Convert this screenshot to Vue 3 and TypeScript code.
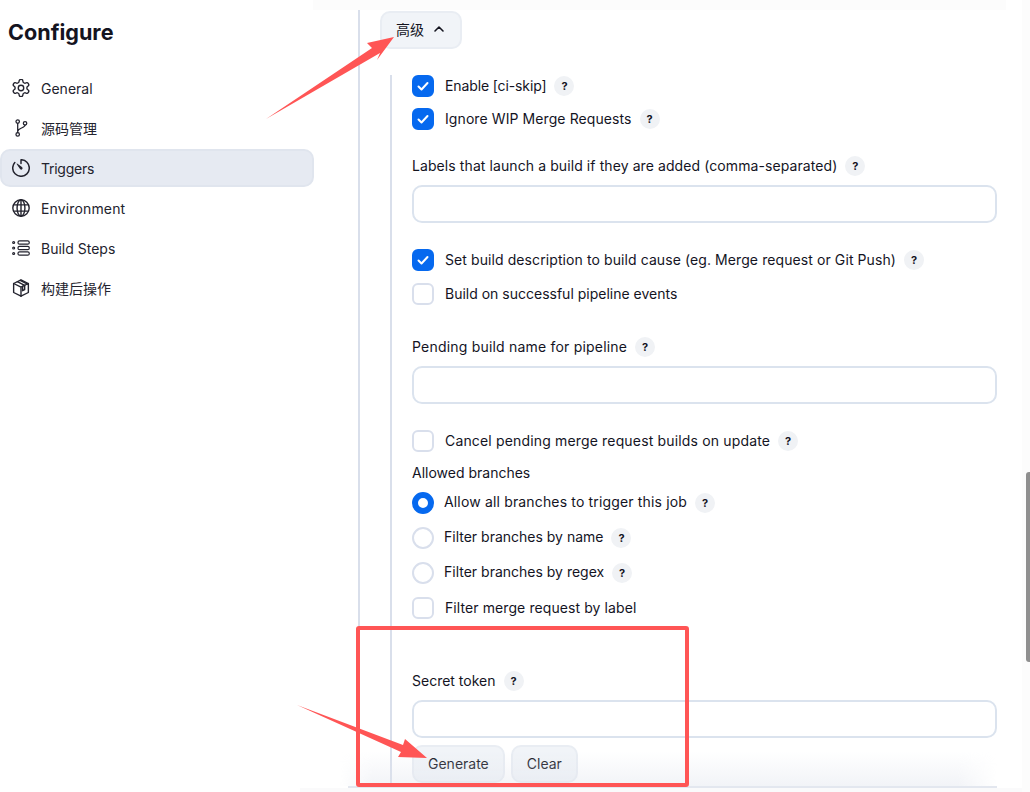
<script setup lang="ts">
const navItems = ['General', '源码管理', 'Triggers', 'Environment', 'Build Steps', '构建后操作']
</script>

<template>
  <div class="page">
    <aside class="sidebar">
      <h1 class="title">Configure</h1>
      <nav class="nav">
        <a v-for="(item, i) in navItems" :key="item" class="nav-item" :class="{ active: i === 2 }">
          <svg v-if="i === 0" class="ico" viewBox="1.500 1.500 21 21" fill="none" stroke="currentColor" stroke-width="1.6" stroke-linecap="round" stroke-linejoin="round"><path d="M12.22 2h-.44a2 2 0 0 0-2 2v.18a2 2 0 0 1-1 1.73l-.43.25a2 2 0 0 1-2 0l-.15-.08a2 2 0 0 0-2.73.73l-.22.38a2 2 0 0 0 .73 2.73l.15.1a2 2 0 0 1 1 1.72v.51a2 2 0 0 1-1 1.74l-.15.09a2 2 0 0 0-.73 2.73l.22.38a2 2 0 0 0 2.73.73l.15-.08a2 2 0 0 1 2 0l.43.25a2 2 0 0 1 1 1.73V20a2 2 0 0 0 2 2h.44a2 2 0 0 0 2-2v-.18a2 2 0 0 1 1-1.73l.43-.25a2 2 0 0 1 2 0l.15.08a2 2 0 0 0 2.73-.73l.22-.39a2 2 0 0 0-.73-2.73l-.15-.08a2 2 0 0 1-1-1.74v-.5a2 2 0 0 1 1-1.74l.15-.09a2 2 0 0 0 .73-2.73l-.22-.38a2 2 0 0 0-2.73-.73l-.15.08a2 2 0 0 1-2 0l-.43-.25a2 2 0 0 1-1-1.73V4a2 2 0 0 0-2-2z"/><circle cx="12" cy="12" r="3.2"/></svg>
          <svg v-else-if="i === 1" class="ico" viewBox="0 0 24 24" fill="none" stroke="currentColor" stroke-width="1.7" stroke-linecap="round" stroke-linejoin="round"><circle cx="7.600" cy="3.400" r="2.300"/><circle cx="7.600" cy="20.600" r="2.300"/><circle cx="17.400" cy="5.800" r="2.300"/><path d="M7.600 5.700v12.600M17.400 8.100c0 4.200-9.800 3.700-9.800 8.400"/></svg>
          <svg v-else-if="i === 2" class="ico" viewBox="48 48 416 416" fill="none" stroke="currentColor" stroke-width="34" stroke-linecap="round" stroke-linejoin="round"><path d="M112.91 128A191.85 191.85 0 0064 254c-1.18 106.35 85.65 193.8 192 194 106.2.2 192-85.83 192-192 0-104.54-83.55-189.61-187.5-192a4.36 4.36 0 00-4.5 4.37V152"/><path d="M233.38 278.63l-79-113a8.13 8.13 0 0111.32-11.32l113 79a32.5 32.5 0 01-37.25 53.26 33.21 33.21 0 01-8.07-7.94z" fill="currentColor" stroke="none"/></svg>
          <svg v-else-if="i === 3" class="ico" viewBox="1 1 22 22" fill="none" stroke="currentColor" stroke-width="1.700"><circle cx="12" cy="12" r="10"/><ellipse cx="12" cy="12" rx="4.800" ry="10"/><path d="M12 2v20M3 8.200h18M3 15.800h18"/></svg>
          <svg v-else-if="i === 4" class="ico" viewBox="0 0 24 24" fill="none" stroke="currentColor" stroke-width="1.600"><rect x="8" y="2.500" width="15" height="4.400" rx="2"/><rect x="8" y="9.800" width="15" height="4.400" rx="2"/><rect x="8" y="17.100" width="15" height="4.400" rx="2"/><circle cx="2.200" cy="4.700" r="1.300"/><circle cx="2.200" cy="12" r="1.300"/><circle cx="2.200" cy="19.300" r="1.300"/></svg>
          <svg v-else class="ico" viewBox="1 1 22 22" fill="none" stroke="currentColor" stroke-width="1.700" stroke-linejoin="round" stroke-linecap="round"><path d="M12 2 21 6.500v11L12 22 3 17.500v-11z"/><path d="M3 6.500 12 11l9-4.500M12 11v11"/><path d="M7.500 4.300 16.500 8.800v5.200M11 2.800l9 4.500M14 9.800v5.500l2.500-1.300"/></svg>
          <span :class="{ 'ls-env': i === 3, 'ls-trig': i === 2 }">{{ item }}</span>
        </a>
      </nav>
    </aside>

    <main class="main">
      <div class="rail">
        <div class="panel">
          <button class="adv" type="button">
            <span class="adv-text">高级</span>
            <svg class="chev" viewBox="0 0 12 12" fill="none" stroke="currentColor" stroke-width="1.600" stroke-linecap="round" stroke-linejoin="round"><path d="M2 8l4-4 4 4"/></svg>
          </button>

          <section class="fields">
            <label class="row ls-n"><span class="box on"><svg viewBox="0 0 22 22" fill="none" stroke="#fff" stroke-width="2" stroke-linecap="round" stroke-linejoin="round"><path d="M6.500 11.500l3 3 6-6.500"/></svg></span>Enable [ci-skip]<i class="help">?</i></label>
            <label class="row g11 ls-1"><span class="box on"><svg viewBox="0 0 22 22" fill="none" stroke="#fff" stroke-width="2" stroke-linecap="round" stroke-linejoin="round"><path d="M6.500 11.500l3 3 6-6.500"/></svg></span>Ignore WIP Merge Requests<i class="help">?</i></label>

            <div class="lbl g25 ls-1">Labels that launch a build if they are added (comma-separated)<i class="help">?</i></div>
            <div class="input g8"></div>

            <label class="row g26 ls-1"><span class="box on"><svg viewBox="0 0 22 22" fill="none" stroke="#fff" stroke-width="2" stroke-linecap="round" stroke-linejoin="round"><path d="M6.500 11.500l3 3 6-6.500"/></svg></span>Set build description to build cause (eg. Merge request or Git Push)<i class="help">?</i></label>
            <label class="row g12"><span class="box"></span>Build on successful pipeline events</label>

            <div class="lbl g31 ls-3">Pending build name for pipeline<i class="help">?</i></div>
            <div class="input g8"></div>

            <label class="row g26 ls-2"><span class="box"></span>Cancel pending merge request builds on update<i class="help">?</i></label>
            <div class="lbl g10">Allowed branches</div>
            <label class="row g8 ls-2"><span class="radio on"></span><span class="radio-text">Allow all branches to trigger this job</span><i class="help">?</i></label>
            <label class="row g13"><span class="radio"></span><span class="radio-text">Filter branches by name</span><i class="help">?</i></label>
            <label class="row g13"><span class="radio"></span><span class="radio-text">Filter branches by regex</span><i class="help">?</i></label>
            <label class="row g13 ls-1"><span class="box"></span>Filter merge request by label</label>

            <div class="lbl g51">Secret token<i class="help">?</i></div>
            <div class="input g8"></div>
            <div class="actions">
              <button class="btn" type="button">Generate</button>
              <button class="btn" type="button">Clear</button>
            </div>
          </section>
        </div>
      </div>
    </main>

    <div class="top-band"></div>
    <div class="bottom-fade"></div>
    <div class="bottom-band"></div>
    <div class="scroll-track"><div class="scroll-thumb"></div></div>

    <svg class="marks" viewBox="0 0 1030 792" fill="#ff5555">
      <polygon points="266,119 372,48 367,43 394,37 377,60 380,53" />
      <polygon points="297,705 403,745 405,739 427,758 398,757 401,752" />
      <rect x="358" y="628" width="329" height="157" rx="1" fill="none" stroke="#ff5555" stroke-width="4" />
    </svg>
  </div>
</template>

<style>
html, body { margin: 0; background: #fff; overflow: hidden; }
</style>

<style scoped>
.page {
  position: relative;
  display: flex;
  width: 1030px;
  height: 792px;
  overflow: hidden;
  background: #fff;
  color: #14141f;
  font-family: Inter, "Noto Sans CJK SC", sans-serif;
  font-size: 14px;
}
.sidebar { width: 314px; flex: none; }
.title {
  margin: 17px 0 0 8px;
  font-size: 21.600px;
  line-height: 30px;
  font-weight: 700;
}
.nav { display: flex; flex-direction: column; gap: 2px; margin-top: 22px; }
.nav-item {
  display: flex;
  align-items: center;
  gap: 11px;
  height: 38px;
  padding-left: 12px;
  border-radius: 10px;
  box-sizing: border-box;
  color: #23232e;
}
.nav-item.active { background: #e6eaf2; border: 2px solid #e0e5ee; padding-left: 10px; }
.ico { width: 18px; height: 18px; flex: none; }
.ls-env { letter-spacing: .14px; }
.ls-trig { letter-spacing: -.25px; }

.main { margin-left: 34px; width: 649px; flex: none; }
.rail {
  height: 788px;
  box-sizing: border-box;
  padding: 10px 0 0 10px;
  border-bottom: 2px solid #e3e7ef;
}
.panel {
  height: 776px;
  box-sizing: border-box;
  padding-top: 1px;
  border-left: 2px solid #d9dfeb;
}
.adv {
  display: flex;
  align-items: center;
  gap: 9px;
  width: 82px;
  height: 38px;
  margin-left: 20px;
  padding: 0 0 2px 14px;
  box-sizing: border-box;
  border: 2px solid #e9edf3;
  border-radius: 10px;
  background: #f1f4f8;
  color: #14141f;
  font: inherit;
}
.chev { width: 12px; height: 12px; }
.fields {
  margin: 26px 0 0 30px;
  padding-left: 20px;
  border-left: 2px solid #d9dfeb;
  height: 711px;
  box-sizing: border-box;
}
.row, .lbl { display: flex; align-items: center; height: 22px; line-height: 22px; white-space: nowrap; }
.radio-text { line-height: 20px; padding-bottom: 2px; }
.ls-n { letter-spacing: -.12px; }
.ls-1 { letter-spacing: .09px; }
.ls-2 { letter-spacing: .16px; }
.ls-3 { letter-spacing: .2px; }
.g8 { margin-top: 8px; } .g10 { margin-top: 10px; } .g11 { margin-top: 11px; } .g12 { margin-top: 12px; }
.g13 { margin-top: 13px; } .g25 { margin-top: 25px; } .g26 { margin-top: 26px; } .g31 { margin-top: 31px; } .g51 { margin-top: 51px; }
.box, .radio {
  width: 22px; height: 22px; flex: none; box-sizing: border-box;
  margin-right: 11px;
  border: 2px solid #d9dfec;
  border-radius: 6px;
  background: #fff;
}
.box.on { background: #0669ef; border-color: #0669ef; }
.box.on svg { display: block; width: 22px; height: 22px; margin: -2px; }
.radio { border-radius: 50%; margin-right: 10px; }
.radio.on { border: 6px solid #0669ef; }
.help {
  display: inline-flex; align-items: center; justify-content: center;
  width: 20px; height: 20px; margin-left: 8px; flex: none;
  border-radius: 50%;
  background: #f0f2f5;
  font-style: normal; font-weight: 700; font-size: 11px; line-height: 20px;
}
.input {
  width: 585px; height: 38px; box-sizing: border-box;
  border: 2px solid #dbe3ee; border-radius: 10px; background: #fff;
}
.actions { display: flex; gap: 6px; margin-top: 7px; }
.btn {
  height: 38px; box-sizing: border-box; padding: 0 14px 2px;
  border: 2px solid #e9edf3; border-radius: 10px; background: #f1f4f8;
  color: #14141f; font: inherit;
}
.top-band {
  position: absolute; left: 313px; top: 0; width: 693px; height: 10px;
  background: #fcfcfc; pointer-events: none;
}
.bottom-fade {
  position: absolute; left: 340px; top: 750px; width: 657px; height: 36px;
  background: linear-gradient(rgba(225,229,238,0), rgba(225,229,238,.42));
  -webkit-mask-image: linear-gradient(90deg, transparent, #000 5%, #000 94%, transparent);
  mask-image: linear-gradient(90deg, transparent, #000 5%, #000 94%, transparent);
  pointer-events: none;
}
.bottom-band {
  position: absolute; left: 300px; right: 0; top: 788px; height: 4px;
  background: #fafafb; pointer-events: none;
}
.scroll-track { position: absolute; right: 0; top: 0; width: 8px; height: 792px; background: #fcfcfc; }
.scroll-thumb {
  position: absolute; right: 0; top: 472px; width: 4px; height: 190px;
  background: #8f8f8f; border-radius: 3px 0 0 3px;
}
.marks { position: absolute; inset: 0; width: 1030px; height: 792px; pointer-events: none; }
</style>
